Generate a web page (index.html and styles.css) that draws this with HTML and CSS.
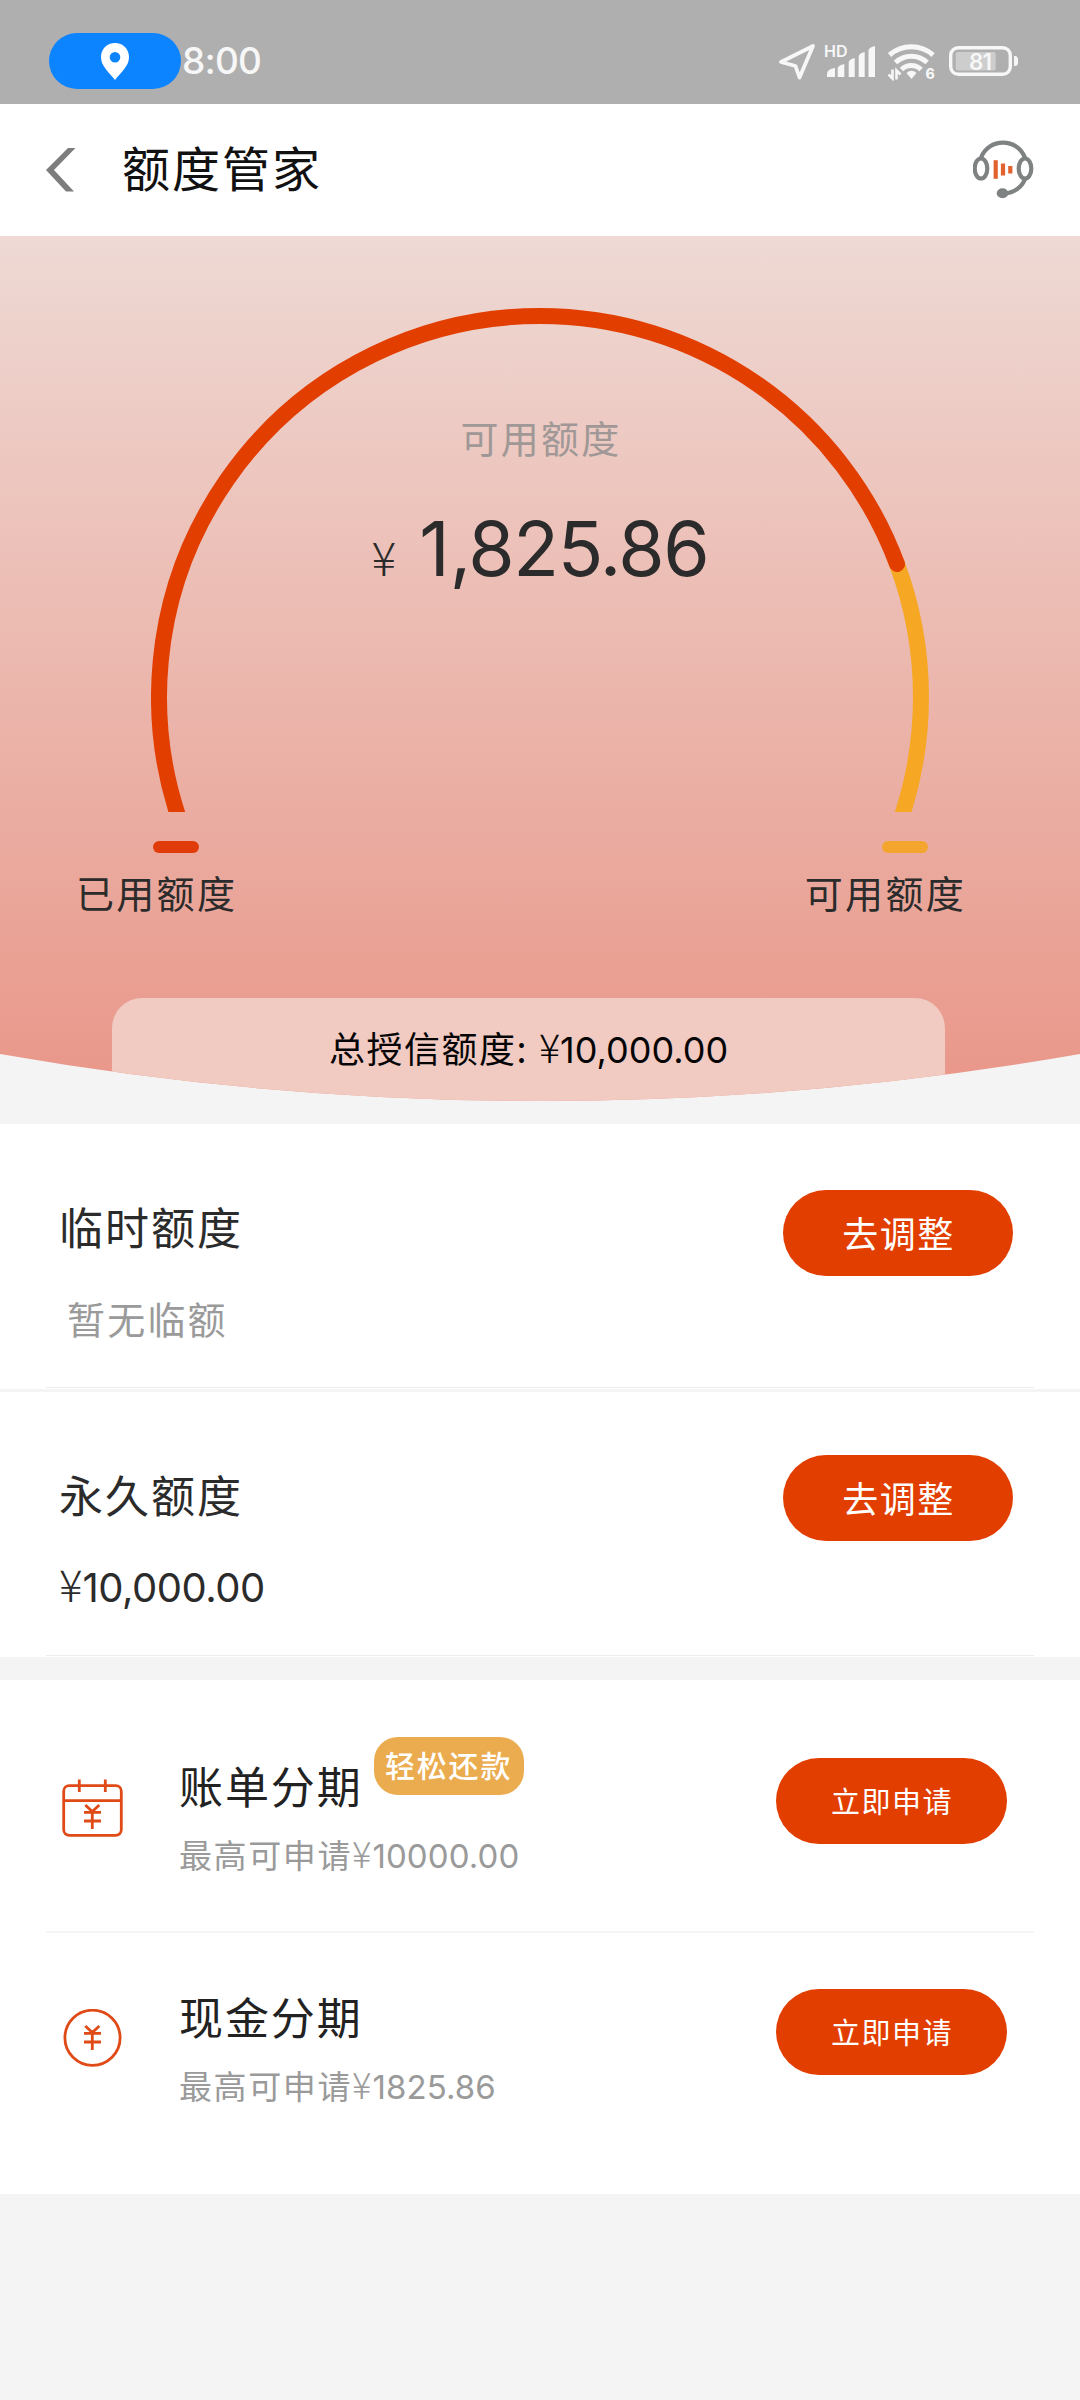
FILE: index.html
```html
<!DOCTYPE html>
<html lang="zh-CN">
<head>
<meta charset="utf-8">
<title>额度管家</title>
<link rel="stylesheet" href="styles.css">
</head>
<body>
<header class="status">
  <div class="status-left">
    <span class="location-pill">
      <svg width="28" height="37" viewBox="0 0 28 37"><path fill="#fff" fill-rule="evenodd" d="M14 0C6 0 0 6 0 14c0 9 7 14 14 23 7-9 14-14 14-23C28 6 22 0 14 0zm0 9a5.300 5.300 0 1 1 0 10.600A5.300 5.300 0 0 1 14 9z"/></svg>
    </span>
    <span class="clock">8:00</span>
  </div>
  <svg class="status-icons" width="242" height="40" viewBox="0 0 242 40" fill="#f7f7f7">
    <path d="M3 21 35 5 21.500 36.500 17.500 25z" fill="none" stroke="#f7f7f7" stroke-width="3.800" stroke-linejoin="round"/>
    <text class="hd" x="46" y="16">HD</text>
    <path d="M49 36v-3q0-5 8-6v9zM59.700 36V27q1-3 6.600-4v13zM70.700 36V21q1-3 6-4v19zM80.700 36V15q1-3 6-4v25zM90.500 36V9q1-3 6.500-4v31z"/>
    <g fill="none" stroke="#f7f7f7" stroke-width="5"><path d="M111.500 14a33 33 0 0 1 43.600 0"/><path d="M117.500 21.500a23 23 0 0 1 31.600 0"/><path d="M123.500 28.500a14 14 0 0 1 19.600 0"/></g>
    <path d="M128.500 32q5-4.500 10 0l-5 6z"/>
    <path d="M114.500 28.500v9l-4-4M118.500 38.500v-9l4 4" fill="none" stroke="#f7f7f7" stroke-width="2.600"/>
    <text class="wifi6" x="147.500" y="38">6</text>
    <rect x="172.700" y="6.700" width="59.600" height="26.600" rx="7.500" fill="none" stroke="#f7f7f7" stroke-width="3.400"/>
    <rect x="177.700" y="11" width="40" height="18.500" rx="2" fill="#cdcdcd"/>
    <path d="M236 15h.5q3.500 0 3.500 3v4q0 3-3.500 3h-.5z"/>
    <text class="battery" x="191" y="29">81</text>
  </svg>
</header>

<nav class="navbar">
  <svg class="back" width="30" height="44" viewBox="0 0 30 44"><path fill="#7d7d7d" d="M22 0h7.500L8 22l20 21.500h-8L0 22z"/></svg>
  <h1>额度管家</h1>
  <svg class="service" width="62" height="60" viewBox="0 0 62 60" fill="none" stroke="#7f8282" stroke-width="4.200">
    <path d="M8 18C15-2.500 45-2.500 52 18"/>
    <ellipse cx="8" cy="28.500" rx="6.300" ry="10"/><ellipse cx="52" cy="28.500" rx="6.300" ry="10"/>
    <path d="M52 39C49 47 41 53 32 53.500"/>
    <ellipse cx="29.500" cy="53.200" rx="5.800" ry="5" fill="#7f8282" stroke="none"/>
    <g stroke="#e2622e" stroke-width="4.200"><path d="M22.700 20.200v18.600"/><path d="M30 23.500v12"/><path d="M37.300 26v7.500"/></g>
  </svg>
</nav>

<section class="hero">
  <div class="gauge">
    <svg class="gauge-arc" width="778" height="504" viewBox="151 308 778 504" fill="none" stroke-width="16" stroke-linecap="round">
      <path stroke="#f6a723" d="M897 564A381 381 0 0 1 897 830"/>
      <path stroke="#e23e00" d="M183 830A381 381 0 0 1 540 316A381 381 0 0 1 897 564"/>
    </svg>
    <div class="gauge-text">
      <p class="gauge-label">可用额度</p>
      <p class="gauge-value"><span class="yen">¥</span><span class="num"><span class="lead">1</span>,825.86</span></p>
    </div>
  </div>
  <div class="legend">
    <div class="legend-item used"><i></i><span>已用额度</span></div>
    <div class="legend-item free"><i></i><span>可用额度</span></div>
  </div>
  <div class="total"><span>总授信额度:</span><span class="yen">¥</span><span class="num">10,000.00</span></div>
</section>

<section class="quota">
  <div class="quota-info">
    <h2>临时额度</h2>
    <p class="none">暂无临额</p>
  </div>
  <a class="btn adjust">去调整</a>
</section>
<section class="quota permanent">
  <div class="quota-info">
    <h2>永久额度</h2>
    <p class="amount"><span class="yen">¥</span><span class="num">10,000.00</span></p>
  </div>
  <a class="btn adjust">去调整</a>
</section>

<section class="offers">
  <div class="offer">
    <svg class="offer-icon" width="62" height="60" viewBox="0 0 62 60" fill="none" stroke="#df4a17" stroke-width="2.800">
      <rect x="2.700" y="7.700" width="57.600" height="49.600" rx="5.500"/><path d="M2.700 22.700H60.300M18.300 1.500V14M44.300 1.500V14M24.300 27l7 6.500 7-6.500M23 34.300h17M23 43h17M31.300 33.500V51"/>
    </svg>
    <div class="offer-info">
      <h2>账单分期<span class="badge">轻松还款</span></h2>
      <p>最高可申请<span class="yen">¥</span><span class="num">10000.00</span></p>
    </div>
    <a class="btn apply">立即申请</a>
  </div>
  <div class="offer">
    <svg class="offer-icon" width="62" height="60" viewBox="0 0 62 60" fill="none" stroke="#df4a17" stroke-width="2.800">
      <circle cx="31.500" cy="28.800" r="27.600"/><path d="M24.300 17l7 6.500 7-6.500M23 24.300h17M23 33h17M31.300 23.500V41"/>
    </svg>
    <div class="offer-info">
      <h2>现金分期</h2>
      <p>最高可申请<span class="yen">¥</span><span class="num">1825.86</span></p>
    </div>
    <a class="btn apply">立即申请</a>
  </div>
</section>
</body>
</html>
```
FILE: styles.css
```css
* { box-sizing: border-box; margin: 0; padding: 0; }
body {
  width: 1080px;
  min-height: 2400px;
  background: #f4f4f4;
  color: #2b2b2b;
  font-family: "Noto Sans CJK SC", sans-serif;
  font-weight: 400;
}
h1, h2 { font-weight: 400; }
.num { font-family: Inter, sans-serif; }
.yen { font-size: 1.1em; font-weight: 300; line-height: 1; }

.status {
  height: 104px;
  padding: 33px 60px 0 49px;
  display: flex;
  justify-content: space-between;
  align-items: flex-start;
  background: #afafaf;
}
.status-left { display: flex; align-items: center; gap: 1px; }
.location-pill {
  width: 132px;
  height: 56px;
  border-radius: 28px;
  background: #0d84ff;
  display: flex;
  align-items: center;
  justify-content: center;
}
.clock { font: 500 37px/56px Inter, sans-serif; letter-spacing: -0.800px; color: #f7f7f7; }
.status-icons { margin-top: 8px; }
.status-icons text { font-family: Inter, sans-serif; }
.hd { font-size: 16px; font-weight: 600; }
.wifi6 { font-size: 14px; font-weight: 800; }
.battery { font-size: 22.500px; font-weight: 600; letter-spacing: -1px; }

.navbar {
  height: 132px;
  padding: 0 45px 0 46px;
  display: flex;
  align-items: center;
  background: #fff;
}
.back { flex: none; }
.navbar h1 { margin: -8px 0 0 46px; font-size: 48px; line-height: 60px; letter-spacing: 2px; color: #111; }
.service { margin-left: auto; }

.hero {
  height: 865px;
  padding-top: 72px;
  background: linear-gradient(#eed9d4, #e99688);
  clip-path: path("M0 0H1080V818A3125 3125 0 0 1 0 818Z");
}
.gauge { width: 778px; height: 504px; margin: 0 auto; display: grid; }
.gauge-arc, .gauge-text { grid-area: 1 / 1; }
.gauge-text { padding-top: 100px; text-align: center; }
.gauge-label { padding-left: 2px; font-size: 38px; line-height: 58px; letter-spacing: 2.300px; color: #a09896; }
.gauge-value {
  display: flex;
  justify-content: center;
  align-items: baseline;
  gap: 23px;
  margin: 33px 0 0 0;
  font-size: 42px;
  line-height: 100px;
}
.gauge-value .num { font-size: 75px; letter-spacing: -1.400px; }
.gauge-value .lead { letter-spacing: 0; }
.legend { display: flex; justify-content: space-between; padding: 29px 114px 0 76px; }
.legend-item { display: flex; flex-direction: column; font-size: 38px; line-height: 56px; letter-spacing: 2.300px; }
.legend-item i { width: 46px; height: 12px; border-radius: 6px; margin: 0 0 11px 77px; background: #e03b08; }
.legend-item.free i { background: #f3a52e; }
.total {
  width: 833px;
  height: 110px;
  margin: 78px 0 0 112px;
  border-radius: 30px 30px 0 0;
  background: #f1cac2;
  display: flex;
  justify-content: center;
  align-items: baseline;
  font-size: 36px;
  line-height: 99px;
  letter-spacing: 1.500px;
  color: #050505;
}
.total .yen { margin-left: 11px; letter-spacing: 0; }
.total .num { letter-spacing: 0; }

.quota {
  height: 265px;
  margin-top: 23px;
  padding: 66px 67px 0 59px;
  display: flex;
  justify-content: space-between;
  align-items: flex-start;
  background: linear-gradient(#ececec, #ececec) 46px 263px / 988px 1px no-repeat #fff;
}
.quota h2 { margin-top: 3px; font-size: 44px; line-height: 66px; letter-spacing: 2px; }
.none { margin: 31px 0 0 8px; font-size: 38px; line-height: 56px; letter-spacing: 2.200px; color: #9a9a9a; }
.amount { margin-top: 28px; font-size: 40px; line-height: 60px; }
.amount .num { letter-spacing: -0.500px; }
.permanent { margin-top: 3px; padding-top: 63px; }
.permanent h2 { margin-top: 6px; }

.btn {
  display: flex;
  align-items: center;
  justify-content: center;
  width: 230px;
  height: 86px;
  padding: 0 0 3px 1px;
  border-radius: 43px;
  background: #e23e00;
  color: #fff;
}
.adjust { font-size: 36px; letter-spacing: 1.500px; }
.apply { width: 231px; font-size: 29px; letter-spacing: 1.500px; }

.offers { height: 514px; margin-top: 23px; background: #fff; }
.offer {
  height: 253px;
  margin: 0 46px;
  padding: 78px 27px 0 15px;
  display: flex;
  align-items: flex-start;
  border-bottom: 2px solid #f5f5f5;
}
.offer:last-child { height: 261px; padding-top: 56px; border: 0; }
.offer-icon { margin-top: 20px; }
.offer-info { margin: -6px 0 0 56px; }
.offer h2 { display: flex; font-size: 44px; line-height: 66px; letter-spacing: 1.900px; color: #222; }
.badge {
  width: 150px;
  height: 58px;
  margin: -15px 0 0 11px;
  border-radius: 24px;
  background: #ebac50;
  color: #fff;
  font-size: 30px;
  font-weight: 500;
  line-height: 55px;
  letter-spacing: 1.800px;
  text-align: center;
}
.offer p { margin-top: 11px; font-size: 33px; line-height: 50px; letter-spacing: 1.600px; color: #9a9a9a; }
.offer p .yen { letter-spacing: 1px; }
.offer p .num { letter-spacing: 0.100px; }
.offer .btn { margin-left: auto; }
```
